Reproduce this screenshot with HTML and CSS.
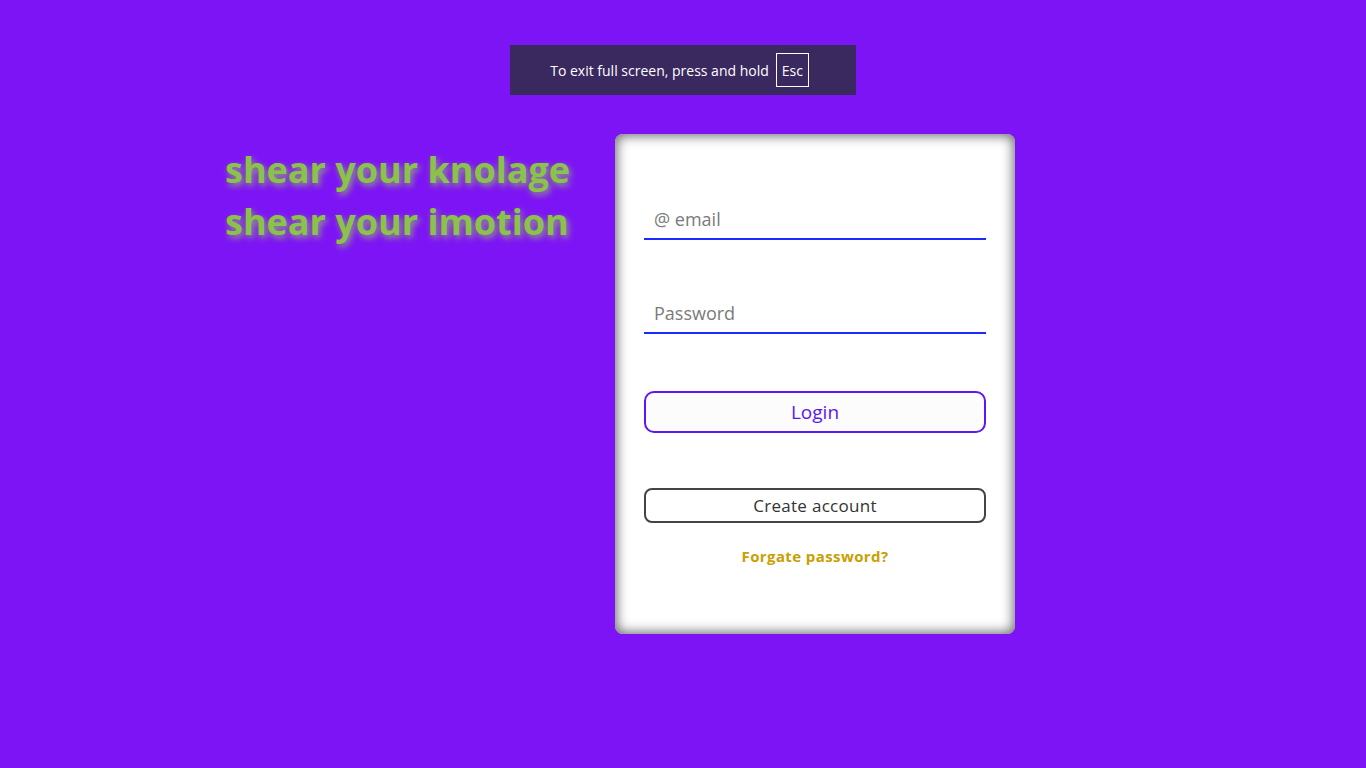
FILE: index.html
```html
<!DOCTYPE html>
<html lang="en">
<head>
<meta charset="utf-8">
<title>Login</title>
<link rel="stylesheet" href="styles.css">
</head>
<body>
<div class="notice">
  <span class="notice-text">To exit full screen, press and hold</span>
  <span class="esc">Esc</span>
</div>
<main class="main">
  <h1 class="slogan">shear your knolage<br>shear your imotion</h1>
  <form class="card">
    <input class="field field-email" type="text" placeholder="@ email">
    <input class="field field-pass" type="password" placeholder="Password">
    <button class="btn-login" type="button">Login</button>
    <button class="btn-create" type="button">Create account</button>
    <a class="forgot" href="#">Forgate password?</a>
  </form>
</main>
</body>
</html>
```

FILE: styles.css
```css
html, body {
  margin: 0;
  padding: 0;
}
body {
  background: #7d14f5;
  font-family: "Open Sans", "Noto Sans", sans-serif;
  min-height: 768px;
  position: relative;
}
.notice {
  position: absolute;
  top: 45px;
  left: 510px;
  width: 346px;
  height: 50px;
  background: #3a295f;
  color: #fff;
  display: flex;
  align-items: center;
  justify-content: center;
  gap: 7px;
  font-family: "Open Sans", sans-serif;
  font-size: 14px;
  box-sizing: border-box;
  padding-right: 7px;
}
.esc {
  border: 1px solid #fff;
  height: 34px;
  width: 33px;
  display: flex;
  align-items: center;
  justify-content: center;
  box-sizing: border-box;
  font-size: 14px;
}
.main {
  display: flex;
  padding-top: 134px;
  padding-left: 225px;
}
.slogan {
  margin: 10px 0 0 0;
  width: 390px;
  font-family: "Open Sans", sans-serif;
  font-weight: 700;
  font-size: 36px;
  line-height: 52px;
  color: #8bc34a;
  letter-spacing: 0;
  text-shadow: 2px 3px 6px rgba(150, 210, 80, 0.75);
}
.card {
  width: 400px;
  height: 500px;
  box-sizing: border-box;
  background: #fff;
  border-radius: 8px;
  box-shadow: inset 0 0 12px 2px #6e6e6e;
  padding: 66px 29px 0 29px;
  display: flex;
  flex-direction: column;
  align-items: stretch;
}
.field {
  height: 40px;
  box-sizing: border-box;
  border: none;
  border-bottom: 2px solid #1a2bff;
  padding: 0 10px;
  font-family: "Open Sans", sans-serif;
  font-size: 18px;
  color: #333;
  background: #fff;
  outline: none;
}
.field::placeholder {
  color: #7a7a7a;
}
.field-pass {
  margin-top: 54px;
}
.btn-login {
  margin-top: 57px;
  height: 42px;
  border: 2px solid #5a18f2;
  border-radius: 10px;
  background: #fcfcfc;
  color: #5a18f2;
  font-family: "Open Sans", sans-serif;
  font-size: 19px;
  padding: 0;
}
.btn-create {
  margin-top: 55px;
  height: 35px;
  border: 2px solid #444;
  border-radius: 8px;
  background: #fff;
  color: #333;
  font-family: "Open Sans", sans-serif;
  font-size: 17px;
  letter-spacing: 0.3px;
  padding: 0;
}
.forgot {
  margin-top: 23px;
  line-height: 20px;
  text-align: center;
  font-family: "Open Sans", sans-serif;
  font-weight: 700;
  font-size: 15px;
  letter-spacing: 0.4px;
  color: #c9a000;
  text-decoration: none;
}
```
